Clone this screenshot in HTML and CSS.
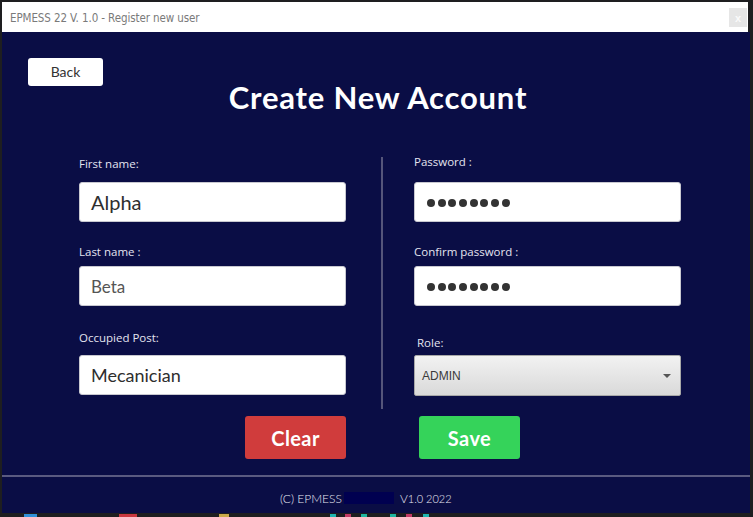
FILE: index.html
```html
<!DOCTYPE html>
<html lang="en">
<head>
<meta charset="utf-8">
<title>EPMESS 22 V. 1.0 - Register new user</title>
<link rel="stylesheet" href="styles.css">
</head>
<body>
<div class="window">
  <div class="titlebar">
    <span class="title-text">EPMESS 22 V. 1.0 - Register new user</span>
    <span class="close">x</span>
  </div>
  <main class="main">
    <header class="header">
      <button class="back">Back</button>
      <h1 class="heading">Create New Account</h1>
    </header>
    <section class="form">
      <div class="col col-left">
        <div class="label l1">First name:</div>
        <div class="field f1 big">Alpha</div>
        <div class="label l2">Last name :</div>
        <div class="field f2 small">Beta</div>
        <div class="label l3">Occupied Post:</div>
        <div class="field f3 mid">Mecanician</div>
      </div>
      <div class="divider"></div>
      <div class="col col-right">
        <div class="label r1">Password :</div>
        <div class="field f1 dots"><i></i><i></i><i></i><i></i><i></i><i></i><i></i><i></i></div>
        <div class="label l2">Confirm password :</div>
        <div class="field f2 dots"><i></i><i></i><i></i><i></i><i></i><i></i><i></i><i></i></div>
        <div class="label r3">Role:</div>
        <div class="select"><span>ADMIN</span><span class="caret"></span></div>
      </div>
    </section>
    <div class="actions">
      <button class="btn clear">Clear</button>
      <button class="btn save">Save</button>
    </div>
    <div class="hr"></div>
    <footer class="footer">
      <span>(C) EPMESS</span><span class="mask"></span><span>V<small>1.0 2022</small></span>
    </footer>
  </main>
</div>
<div class="taskbar">
  <span class="tb tb-blue"></span>
  <span class="tb tb-red"></span>
  <span class="tb tb-yellow"></span>
  <span class="tb tb-teal"></span>
  <span class="tb tb-pink"></span>
  <span class="tb tb-teal2"></span>
  <span class="tb tb-teal3"></span>
  <span class="tb tb-pink2"></span>
  <span class="tb tb-teal4"></span>
</div>
</body>
</html>
```
FILE: styles.css
```css
* { box-sizing: border-box; }
html, body { margin: 0; padding: 0; }
body {
  width: 753px;
  height: 517px;
  overflow: hidden;
  background: #1e1e20;
  font-family: Lato, "Open Sans", sans-serif;
}
.window {
  margin: 2px 0 0 2px;
  width: 748px;
}
.titlebar {
  height: 30px;
  width: 746px;
  background: #ffffff;
  display: flex;
  align-items: center;
  justify-content: space-between;
  padding-left: 8px;
  padding-right: 1px;
}
.title-text {
  font-family: "DejaVu Sans Condensed", "Liberation Sans Narrow", "Liberation Sans", sans-serif;
  font-stretch: condensed;
  font-size: 11.5px;
  color: #7a7a7a;
  letter-spacing: -0.1px;
  margin-top: 1px;
}
.close {
  width: 18px;
  height: 19px;
  margin-top: 1px;
  background: #e6e6e6;
  color: #fafafa;
  font-family: "Liberation Sans", sans-serif;
  font-size: 11px;
  font-weight: bold;
  display: flex;
  align-items: center;
  justify-content: center;
}
.main {
  background: #0a0d45;
  height: 481px;
  width: 748px;
}
.header {
  display: grid;
  padding-top: 26px;
}
.header > * { grid-area: 1 / 1; }
.back {
  justify-self: start;
  align-self: start;
  margin: 0 0 0 26px;
  width: 75px;
  height: 28px;
  background: #ffffff;
  border: none;
  border-radius: 3px;
  font-family: Lato, sans-serif;
  font-size: 14px;
  color: #333;
  padding: 0 0 1px 0;
}
.heading {
  margin: 21px 0 0 0;
  text-align: center;
  font-family: Lato, sans-serif;
  font-weight: 700;
  font-size: 31px;
  letter-spacing: 0.8px;
  line-height: 37px;
  color: #ffffff;
  padding-left: 4px;
}
.form {
  display: flex;
  align-items: flex-start;
  padding-left: 77px;
  margin-top: 38px;
}
.col {
  width: 267px;
  display: flex;
  flex-direction: column;
}
.label {
  font-family: "Open Sans", sans-serif;
  font-size: 11.5px;
  line-height: 16px;
  height: 16px;
  color: #e4e4f0;
  white-space: nowrap;
}
.l1 { margin-top: 2px; }
.l2 { margin-top: 22px; }
.l3 { margin-top: 24px; }
.r1 { margin-top: 0; }
.r3 { margin-top: 29px; padding-left: 3px; }
.field {
  height: 40px;
  background: #ffffff;
  border: 1px solid #c8c8d0;
  border-radius: 3px;
  display: flex;
  align-items: center;
  padding-left: 11px;
  color: #333;
  font-family: Lato, sans-serif;
}
.col-left .f1 { margin-top: 10px; }
.col-right .f1 { margin-top: 12px; }
.f2 { margin-top: 6px; }
.f3 { margin-top: 9px; }
.big { font-size: 20px; color: #2e2e2e; }
.small { font-size: 17px; color: #555; }
.mid { font-size: 18px; color: #2e2e2e; }
.dots { gap: 2.7px; padding-left: 12px; padding-top: 1px; }
.dots i {
  display: block;
  width: 8px;
  height: 8px;
  border-radius: 50%;
  background: #333333;
}
.divider {
  width: 2px;
  height: 252px;
  margin: 3px 31px 0 35px;
  background: #55557a;
}
.select {
  margin-top: 4px;
  height: 41px;
  border: 1px solid #a8a8a8;
  border-radius: 2px;
  background: linear-gradient(#f2f2f2, #d9d9d9);
  display: flex;
  align-items: center;
  justify-content: space-between;
  padding: 0 9px 0 7px;
  font-family: "Liberation Sans", Arial, sans-serif;
  font-size: 12px;
  color: #3a3a3a;
}
.caret {
  width: 0;
  height: 0;
  border-left: 4px solid transparent;
  border-right: 4px solid transparent;
  border-top: 4px solid #555;
}
.actions {
  display: flex;
  gap: 73px;
  padding-left: 243px;
  margin-top: 7px;
}
.btn {
  width: 101px;
  height: 43px;
  border: none;
  border-radius: 3px;
  color: #ffffff;
  font-family: Lato, sans-serif;
  font-weight: 700;
  font-size: 20px;
  letter-spacing: 0.4px;
  padding: 0;
}
.clear { background: #d03c3c; }
.save { background: #35d35a; }
.hr {
  margin-top: 16px;
  height: 2px;
  width: 748px;
  background: #5a5a80;
}
.footer {
  display: flex;
  align-items: center;
  padding-left: 278px;
  margin-top: 14px;
  height: 14px;
  font-family: Lato, sans-serif;
  font-weight: 300;
  font-size: 12px;
  color: #e8e8f4;
}
.footer small { font-size: 11px; }
.mask {
  display: inline-block;
  width: 50px;
  height: 12px;
  background: #000050;
  margin: 0 6px 0 2px;
}
.taskbar {
  height: 4px;
  display: flex;
}
.tb { display: block; height: 3px; margin-top: 1px; }
.tb-blue { margin-left: 24px; width: 13px; background: #2f8fd8; }
.tb-red { margin-left: 82px; width: 18px; background: #c9373f; }
.tb-yellow { margin-left: 82px; width: 10px; background: #c9a94a; }
.tb-teal { margin-left: 101px; width: 6px; background: #1fb5b0; }
.tb-pink { margin-left: 9px; width: 6px; background: #c33a66; }
.tb-teal2 { margin-left: 10px; width: 6px; background: #1fb5a0; }
.tb-teal3 { margin-left: 23px; width: 6px; background: #1fb5a0; }
.tb-pink2 { margin-left: 10px; width: 6px; background: #c33a66; }
.tb-teal4 { margin-left: 11px; width: 6px; background: #1fb5b0; }
```
